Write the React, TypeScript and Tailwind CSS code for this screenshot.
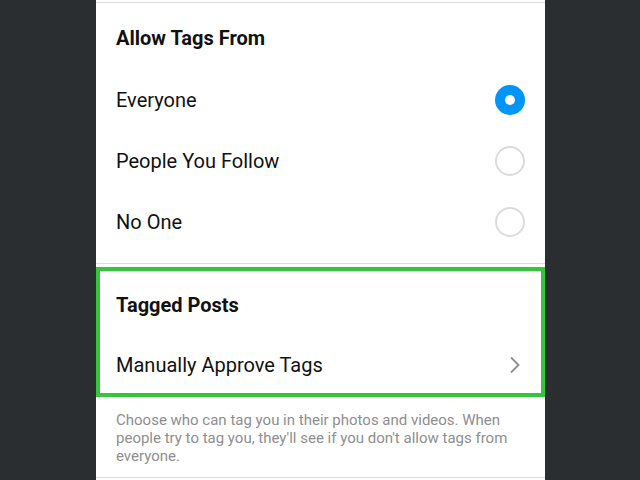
import React from "react";

function Radio({ checked }: { checked?: boolean }) {
  if (checked) {
    return (
      <div className="w-[30px] h-[30px] rounded-full bg-[#0095f6] flex items-center justify-center">
        <div className="w-[10px] h-[10px] rounded-full bg-white" />
      </div>
    );
  }
  return <div className="w-[30px] h-[30px] rounded-full border-2 border-[#dbdbdb] bg-white" />;
}

export default function App() {
  const rows = [
    { label: "Everyone", checked: true },
    { label: "People You Follow" },
    { label: "No One" },
  ];
  return (
    <div className="w-[640px] h-[480px] bg-[#2a2e31] flex justify-center overflow-hidden" style={{ fontFamily: "Roboto, 'Noto Sans', sans-serif" }}>
      <div className="w-[449px] ml-[1px] bg-white flex flex-col">
        <div className="h-[2px]" />
        <div className="border-t border-[#dbdbdb] h-[67px] flex items-center pl-[20px] pt-[3px]">
          <span className="text-[20px] font-bold text-[#111]">Allow Tags From</span>
        </div>
        {rows.map((r) => (
          <div key={r.label} className="h-[61px] flex items-center justify-between pl-[20px] pr-[20px]">
            <span className="text-[20px] text-[#111]">{r.label}</span>
            <Radio checked={r.checked} />
          </div>
        ))}
        <div className="h-[11px]" />
        <div className="border-t border-[#dbdbdb]" />
        <div className="mt-[3px] border-4 border-[#34c53c] flex flex-col">
          <div className="h-[65px] flex items-center pl-[16px] pt-[3px]">
            <span className="text-[20px] font-bold text-[#111]">Tagged Posts</span>
          </div>
          <div className="h-[57px] flex items-center justify-between pl-[16px] pr-[20px]">
            <span className="text-[20px] text-[#111]">Manually Approve Tags</span>
            <svg width="12" height="18" viewBox="0 0 12 18" fill="none">
              <path d="M2 1.5 L9.5 9 L2 16.5" stroke="#8e8e8e" strokeWidth="1.8" />
            </svg>
          </div>
        </div>
        <div className="px-[20px] pt-[14px] text-[15px] leading-[18px] text-[#8e8e8e]">
          Choose who can tag you in their photos and videos. When people try to tag you, they'll see if you don't allow tags from everyone.
        </div>
        <div className="h-[12px]" />
        <div className="border-t border-[#dbdbdb]" />
      </div>
    </div>
  );
}
